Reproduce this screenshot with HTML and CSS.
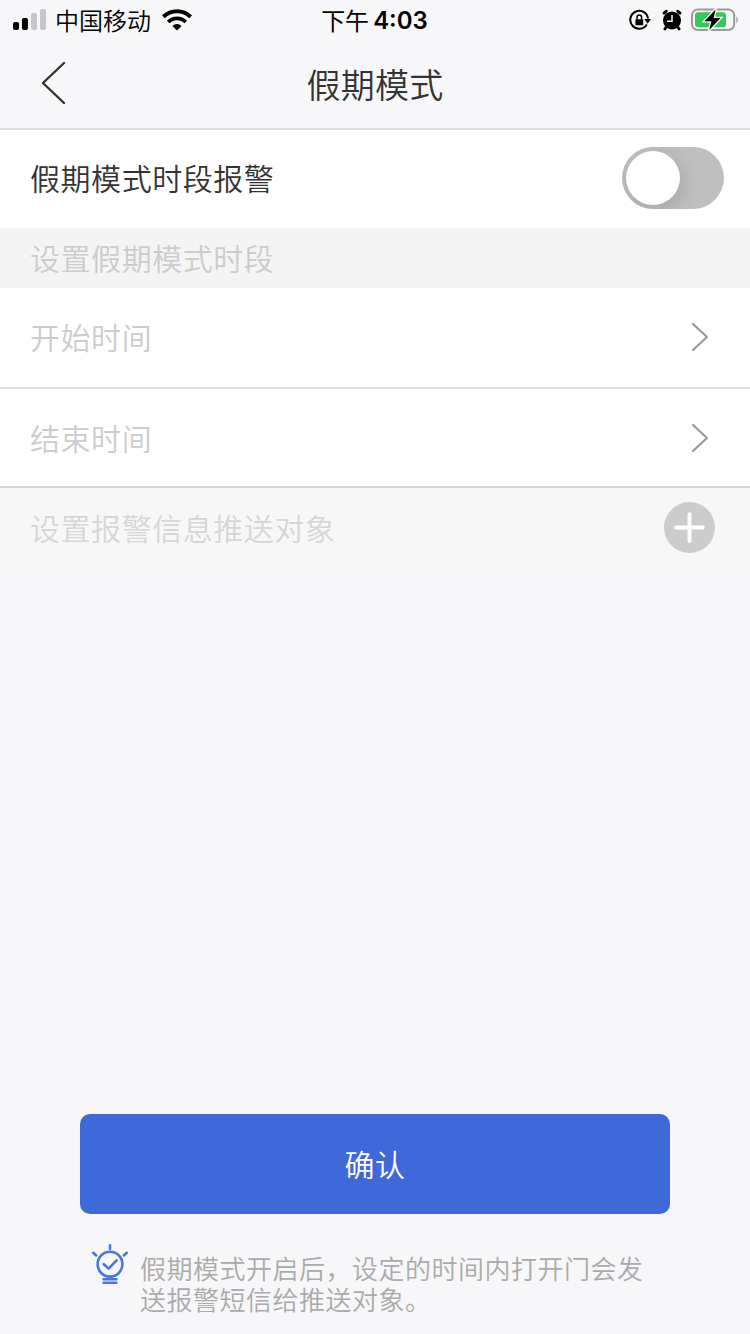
FILE: index.html
```html
<!DOCTYPE html>
<html lang="zh-CN">
<head>
    <meta charset="UTF-8">
    <meta name="viewport" content="width=device-width, initial-scale=1.0">
    <title>假期模式</title>
    <link rel="stylesheet" href="styles.css">
</head>
<body>

    <div class="status-bar">
        <div class="status-left">
            <svg class="signal" width="34" height="22" viewBox="0 0 34 22">
                <rect x="0" y="13" width="6" height="8" rx="2"/>
                <rect x="9" y="9" width="6" height="12" rx="2"/>
                <rect class="off" x="18" y="4" width="6" height="17" rx="2"/>
                <rect class="off" x="27" y="0" width="6" height="21" rx="2"/>
            </svg>
            <span class="carrier">中国移动</span>
            <svg class="wifi" width="30" height="22" viewBox="0 0 30 22">
                <path d="M1.4 7.8 A19.5 19.5 0 0 1 28.6 7.8" fill="none" stroke="#000" stroke-width="4"/>
                <path d="M6.2 13 A12.4 12.4 0 0 1 23.8 13" fill="none" stroke="#000" stroke-width="3.8"/>
                <path d="M10.4 17 A6.5 6.5 0 0 1 19.6 17 L15 21.5 Z"/>
            </svg>
        </div>
        <div class="time"><span>下午</span><b>4:03</b></div>
        <div class="status-right">
            <svg width="22" height="22" viewBox="0 0 22 22">
                <path d="M17.8 15.4 A8.9 8.9 0 1 1 19 9.6" fill="none" stroke="#000" stroke-width="2"/>
                <path d="M15.2 10 H22 L18.6 14.8 Z"/>
                <rect x="6.4" y="10.2" width="7.8" height="6" rx=".8"/>
                <path d="M8 10.6 V8.4 A2.3 2.3 0 0 1 12.6 8.4 V10.6" fill="none" stroke="#000" stroke-width="1.5"/>
            </svg>
            <svg width="20" height="22" viewBox="0 0 20 22">
                <circle cx="10" cy="11.4" r="9"/>
                <path d="M2 4.2 L4.4 2.2 M18 4.2 L15.6 2.2" stroke="#000" stroke-width="2.8" stroke-linecap="round"/>
                <path d="M2.8 20 L5 17.4 M17.2 20 L15 17.4" stroke="#000" stroke-width="2.8" stroke-linecap="round"/>
                <path d="M10 6 V12.2 H5" fill="none" stroke="#f7f7f9" stroke-width="1.5"/>
            </svg>
            <svg class="battery" width="48" height="24" viewBox="0 0 48 24">
                <rect x="1" y="1.4" width="42.2" height="20.6" rx="6" fill="none" stroke="#9b9b9d" stroke-width="2"/>
                <rect x="4" y="4.2" width="31" height="15" rx="3.2" fill="#34c759"/>
                <path d="M45.4 8.2 Q48.4 11.8 45.4 15.4 Z" fill="#9b9b9d"/>
                <path d="M24.6 1.4 L13.4 13.2 H20.4 L18.2 22 L29.6 10 H22.6 Z" stroke="#f7f7f9" stroke-width="2.6" paint-order="stroke"/>
            </svg>
        </div>
    </div>

    <div class="nav-bar">
        <svg class="back" width="28" height="44" viewBox="0 0 28 44">
            <path d="M24 2 L3 22 L24 42" fill="none" stroke="#333" stroke-width="2.4" stroke-linecap="round" stroke-linejoin="round"/>
        </svg>
        <h1>假期模式</h1>
    </div>

    <div class="row row-alarm">
        <span>假期模式时段报警</span>
        <div class="switch"><div class="knob"></div></div>
    </div>

    <div class="section-title">设置假期模式时段</div>

    <div class="row row-start disabled">
        <span>开始时间</span>
        <svg class="arrow" width="18" height="30" viewBox="0 0 18 30">
            <path d="M2 2 L16 15 L2 28" fill="none" stroke="#999" stroke-width="2.2" stroke-linecap="round" stroke-linejoin="round"/>
        </svg>
    </div>
    <div class="row row-end disabled">
        <span>结束时间</span>
        <svg class="arrow" width="18" height="30" viewBox="0 0 18 30">
            <path d="M2 2 L16 15 L2 28" fill="none" stroke="#999" stroke-width="2.2" stroke-linecap="round" stroke-linejoin="round"/>
        </svg>
    </div>

    <div class="push-target">
        <span>设置报警信息推送对象</span>
        <svg width="51" height="51" viewBox="0 0 51 51">
            <circle cx="25.5" cy="25.5" r="25.5" fill="#ccc"/>
            <path d="M12.3 25.5 H38.7 M25.5 12.3 V38.7" stroke="#fff" stroke-width="4" stroke-linecap="round"/>
        </svg>
    </div>

    <div class="footer">
        <button class="confirm">确认</button>
        <div class="tip">
            <svg width="38" height="42" viewBox="0 0 38 42" fill="none" stroke="#4675dc" stroke-width="2.6" stroke-linecap="round" stroke-linejoin="round">
                <circle cx="19" cy="21.2" r="12.4"/>
                <path d="M12.8 21.2 L17.6 25.6 L25.6 17.4"/>
                <path d="M19 2.4 V6 M2.2 9.8 L5.2 12.4 M35.8 9.8 L32.8 12.4"/>
                <path d="M12.6 36.2 H25.4 M12.6 39.8 H25.4"/>
            </svg>
            <p>假期模式开启后，设定的时间内打开门会发送报警短信给推送对象。</p>
        </div>
    </div>

</body>
</html>
```

FILE: styles.css
```css
* {
    box-sizing: border-box;
}

body {
    margin: 0;
    height: 1334px;
    display: flex;
    flex-direction: column;
    background-color: #f7f7f9;
    color: #333;
    font-family: "Noto Sans CJK SC", sans-serif;
    font-size: 30px;
    font-weight: 350;
    letter-spacing: 0.55px;
    overflow: hidden;
}

svg {
    display: block;
    flex: none;
}

/* Status bar */
.status-bar {
    height: 40px;
    display: grid;
    grid-template-columns: 1fr auto 1fr;
    align-items: center;
    padding: 0 11px 0 13px;
    color: #000;
    font-size: 24px;
    line-height: 38px;
    letter-spacing: 0;
}

.status-left,
.status-right {
    display: flex;
    align-items: center;
    padding-bottom: 1px;
}

.signal .off {
    fill: #c7c7c9;
}

.carrier {
    margin: 0 11px 0 8px;
}

.time {
    display: flex;
    gap: 4px;
    margin-right: 3px;
    font-weight: 400;
}

.time b {
    padding-top: 1px;
    font-family: Inter, sans-serif;
    font-weight: 600;
}

.status-right {
    justify-content: flex-end;
    gap: 11px;
}

.battery {
    margin-left: -2px;
}

/* Navigation */
.nav-bar {
    height: 90px;
    position: relative;
    border-bottom: 2px solid #dcdcdc;
}

.nav-bar h1 {
    margin: 0;
    font-size: 34px;
    font-weight: 350;
    line-height: 87px;
    letter-spacing: 0.2px;
    text-align: center;
}

.back {
    position: absolute;
    left: 40px;
    top: 21px;
}

/* List */
.row {
    display: flex;
    align-items: center;
    justify-content: space-between;
    padding: 0 41px 2px 30px;
    background-color: #fff;
}

.row-alarm {
    height: 98px;
    padding-right: 26px;
}

.row-start {
    height: 101px;
    border-bottom: 2px solid #e0e0e0;
}

.row-end {
    height: 99px;
    padding-bottom: 0;
    border-bottom: 2px solid #d4d4d4;
}

.row span {
    padding-bottom: 2px;
}

.disabled {
    color: #ccc;
}

.switch {
    width: 102px;
    height: 62px;
    padding: 4px;
    border-radius: 31px;
    background-color: #bfbfbf;
    overflow: hidden;
}

.knob {
    width: 54px;
    height: 54px;
    border-radius: 50%;
    background-color: #fff;
    box-shadow: 2px 5px 20px rgba(0, 0, 0, 0.14);
}

.section-title {
    height: 60px;
    padding-left: 30px;
    line-height: 58px;
    background-color: #f4f4f4;
    color: #ccc;
}

.push-target {
    height: 83px;
    display: flex;
    align-items: flex-start;
    justify-content: space-between;
    padding: 14px 35px 0 30px;
    line-height: 50px;
    background-color: #f7f7f7;
    color: #d6d6d4;
}

/* Bottom */
.footer {
    margin-top: auto;
    padding: 0 80px 18px;
}

.confirm {
    display: block;
    width: 100%;
    height: 100px;
    padding: 0 0 3px;
    border: none;
    border-radius: 10px;
    background-color: #3f68d9;
    color: #fff;
    font: inherit;
    letter-spacing: inherit;
}

.tip {
    display: flex;
    gap: 11px;
    padding: 29px 0 0 11px;
}

.tip p {
    width: 510px;
    margin: 9px 0 2px;
    color: #aaa;
    font-size: 26px;
    line-height: 31px;
    letter-spacing: 0.5px;
}
```
